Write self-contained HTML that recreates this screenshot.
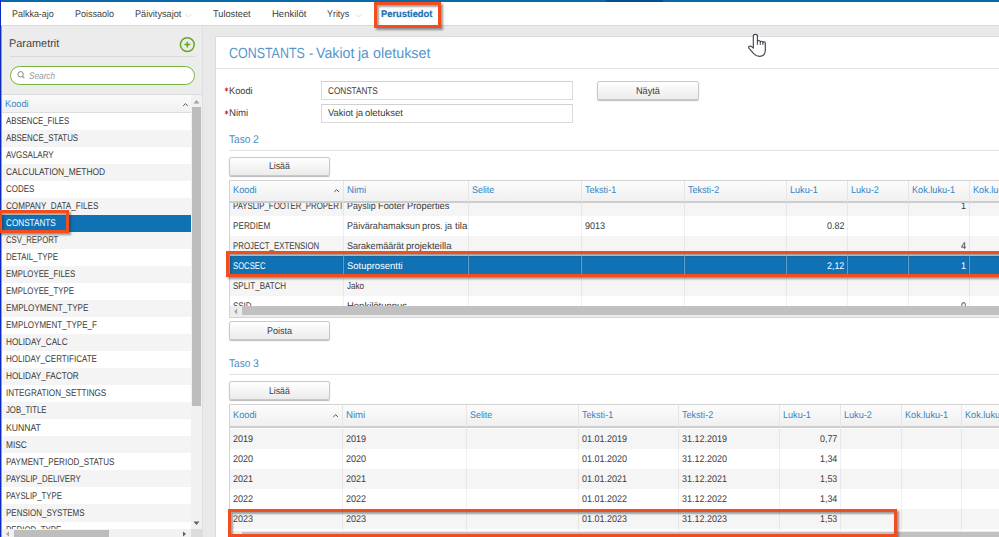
<!DOCTYPE html><html><head><meta charset="utf-8"><style>
*{box-sizing:border-box;margin:0;padding:0}
html,body{width:999px;height:537px;overflow:hidden;background:#e9e9e9;font-family:"Liberation Sans",sans-serif;color:#333;position:relative}
.a{position:absolute}
.t{position:absolute;white-space:nowrap;line-height:1;transform-origin:0 0;-webkit-text-stroke:0px currentColor;text-rendering:geometricPrecision}
.clip{position:absolute;overflow:hidden}
.btn{position:absolute;border:1px solid #c9c9c9;border-radius:2px;background:linear-gradient(#ffffff,#ebebeb);box-shadow:0 1px 1px rgba(0,0,0,.28)}
.inp{position:absolute;border:1px solid #dadada;border-top-color:#d0d0d0;background:#fff}
.orange{position:absolute;border:3.3px solid #f04e1f;box-shadow:2px 2px 2px rgba(50,50,50,.5), inset 2px 2px 2px rgba(50,50,50,.45)}
</style></head><body>
<div class="a" style="left:0px;top:0px;width:999px;height:26px;background:#fff;"></div>
<div class="a" style="left:0px;top:0px;width:999px;height:2px;background:#0b68a9;"></div>
<div class="a" style="left:606px;top:0px;width:57px;height:2px;background:#06508a;"></div>
<div class="a" style="left:1px;top:25px;width:998px;height:1px;background:#d9d9d9;"></div>
<div class="t" style="left:11.60px;top:10.08px;font-size:9.71px;color:#3d3d3d;"><span style="position:absolute;left:0.00px;top:0;transform:scaleX(0.9224);transform-origin:0 0">Palkka-ajo</span></div>
<div class="t" style="left:74.60px;top:10.08px;font-size:9.71px;color:#3d3d3d;"><span style="position:absolute;left:0.00px;top:0;transform:scaleX(0.9259);transform-origin:0 0">Poissaolo</span></div>
<div class="t" style="left:134.60px;top:10.08px;font-size:9.71px;color:#3d3d3d;"><span style="position:absolute;left:0.00px;top:0;transform:scaleX(0.9434);transform-origin:0 0">Päivitysajot</span></div>
<div class="t" style="left:212.80px;top:10.08px;font-size:9.71px;color:#3d3d3d;"><span style="position:absolute;left:0.00px;top:0;transform:scaleX(0.9514);transform-origin:0 0">Tulosteet</span></div>
<div class="t" style="left:271.80px;top:10.08px;font-size:9.71px;color:#3d3d3d;"><span style="position:absolute;left:0.00px;top:0;transform:scaleX(0.9784);transform-origin:0 0">Henkilöt</span></div>
<div class="t" style="left:327.00px;top:10.08px;font-size:9.71px;color:#3d3d3d;"><span style="position:absolute;left:0.00px;top:0;transform:scaleX(0.9155);transform-origin:0 0">Yritys</span></div>
<div class="t" style="left:381.00px;top:10.08px;font-size:9.71px;color:#1a70b6;font-weight:bold;-webkit-text-stroke:0.2px #1a70b6;"><span style="position:absolute;left:0.00px;top:0;transform:scaleX(0.9626);transform-origin:0 0">Perustiedot</span></div>
<svg class="a" style="left:185px;top:13px" width="7" height="5" viewBox="0 0 7 5"><path d="M0.5 1L3.5 4L6.5 1" fill="none" stroke="#d8d8d8" stroke-width="0.9"/></svg>
<svg class="a" style="left:355px;top:13px" width="7" height="5" viewBox="0 0 7 5"><path d="M0.5 1L3.5 4L6.5 1" fill="none" stroke="#d8d8d8" stroke-width="0.9"/></svg>
<div class="a" style="left:0px;top:26px;width:202px;height:511px;background:#ececec;"></div>
<div class="a" style="left:202px;top:26px;width:1px;height:511px;background:#dfdfdf;"></div>
<div class="t" style="left:9.40px;top:39.01px;font-size:11.20px;color:#444;"><span style="position:absolute;left:0.00px;top:0;transform:scaleX(0.9747);transform-origin:0 0">Parametrit</span></div>
<svg class="a" style="left:179px;top:36px" width="17" height="17" viewBox="0 0 17 17"><circle cx="8.3" cy="8.6" r="6.9" fill="none" stroke="#64a81e" stroke-width="1.5"/><path d="M8.3 5.7v5.8M5.4 8.6h5.8" stroke="#64a81e" stroke-width="1.5"/></svg>
<div class="a" style="left:10px;top:56px;width:185px;height:1px;background:#dadada;"></div>
<div class="a" style="left:10px;top:66px;width:185px;height:19px;border:1.5px solid #78b444;border-radius:10px;background:#fff"></div>
<svg class="a" style="left:16px;top:70px" width="10" height="10" viewBox="0 0 10 10"><circle cx="4.6" cy="4.3" r="2.7" fill="none" stroke="#858585" stroke-width="1.0"/><path d="M6.5 6.3l1.9 1.9" stroke="#858585" stroke-width="1.1"/></svg>
<div class="t" style="left:29.00px;top:71.68px;font-size:9.71px;color:#9a9a9a;font-style:italic;"><span style="position:absolute;left:0.00px;top:0;transform:scaleX(0.8476);transform-origin:0 0">Search</span></div>
<div class="a" style="left:1px;top:94px;width:201px;height:1px;background:#dcdcdc;"></div>
<div class="a" style="left:1px;top:95px;width:190px;height:17px;background:linear-gradient(#fafafa,#f1f1f1);"></div>
<div class="a" style="left:1px;top:112px;width:190px;height:1px;background:#dedede;"></div>
<div class="t" style="left:5.40px;top:99.98px;font-size:9.71px;color:#3a86c4;"><span style="position:absolute;left:0.00px;top:0;transform:scaleX(0.9523);transform-origin:0 0">Koodi</span></div>
<svg class="a" style="left:182px;top:102px" width="7" height="5" viewBox="0 0 7 5"><path d="M1.2 3.9L3.5 1.7L5.8 3.9" fill="none" stroke="#505050" stroke-width="1.0"/></svg>
<div class="clip" style="left:1px;top:113px;width:190px;height:416px">
<div class="a" style="left:0;top:-0.2px;width:190px;height:17.1px;background:#fff"></div>
<div class="t" style="left:4.80px;top:3.98px;font-size:9.71px;color:#3a3a3a;"><span style="position:absolute;left:0.00px;top:0;transform:scaleX(0.8034);transform-origin:0 0">ABSENCE_FILES</span></div>
<div class="a" style="left:0;top:16.83px;width:190px;height:17.1px;background:#f4f4f4"></div>
<div class="t" style="left:4.80px;top:21.01px;font-size:9.71px;color:#3a3a3a;"><span style="position:absolute;left:0.00px;top:0;transform:scaleX(0.8138);transform-origin:0 0">ABSENCE_STATUS</span></div>
<div class="a" style="left:0;top:33.86px;width:190px;height:17.1px;background:#fff"></div>
<div class="t" style="left:4.80px;top:38.04px;font-size:9.71px;color:#3a3a3a;"><span style="position:absolute;left:0.00px;top:0;transform:scaleX(0.8230);transform-origin:0 0">AVGSALARY</span></div>
<div class="a" style="left:0;top:50.89px;width:190px;height:17.1px;background:#f4f4f4"></div>
<div class="t" style="left:4.80px;top:55.07px;font-size:9.71px;color:#3a3a3a;"><span style="position:absolute;left:0.00px;top:0;transform:scaleX(0.8647);transform-origin:0 0">CALCULATION_METHOD</span></div>
<div class="a" style="left:0;top:67.92px;width:190px;height:17.1px;background:#fff"></div>
<div class="t" style="left:4.80px;top:72.10px;font-size:9.71px;color:#3a3a3a;"><span style="position:absolute;left:0.00px;top:0;transform:scaleX(0.8215);transform-origin:0 0">CODES</span></div>
<div class="a" style="left:0;top:84.95px;width:190px;height:17.1px;background:#f4f4f4"></div>
<div class="t" style="left:4.80px;top:89.13px;font-size:9.71px;color:#3a3a3a;"><span style="position:absolute;left:0.00px;top:0;transform:scaleX(0.8349);transform-origin:0 0">COMPANY_DATA_FILES</span></div>
<div class="a" style="left:0;top:101.98px;width:190px;height:17.1px;background:#1071b5"></div>
<div class="t" style="left:4.80px;top:106.16px;font-size:9.71px;color:#fff;"><span style="position:absolute;left:0.00px;top:0;transform:scaleX(0.8425);transform-origin:0 0">CONSTANTS</span></div>
<div class="a" style="left:0;top:119.01px;width:190px;height:17.1px;background:#f4f4f4"></div>
<div class="t" style="left:4.80px;top:123.19px;font-size:9.71px;color:#3a3a3a;"><span style="position:absolute;left:0.00px;top:0;transform:scaleX(0.7975);transform-origin:0 0">CSV_REPORT</span></div>
<div class="a" style="left:0;top:136.04px;width:190px;height:17.1px;background:#fff"></div>
<div class="t" style="left:4.80px;top:140.22px;font-size:9.71px;color:#3a3a3a;"><span style="position:absolute;left:0.00px;top:0;transform:scaleX(0.8134);transform-origin:0 0">DETAIL_TYPE</span></div>
<div class="a" style="left:0;top:153.07px;width:190px;height:17.1px;background:#f4f4f4"></div>
<div class="t" style="left:4.80px;top:157.25px;font-size:9.71px;color:#3a3a3a;"><span style="position:absolute;left:0.00px;top:0;transform:scaleX(0.8069);transform-origin:0 0">EMPLOYEE_FILES</span></div>
<div class="a" style="left:0;top:170.1px;width:190px;height:17.1px;background:#fff"></div>
<div class="t" style="left:4.80px;top:174.28px;font-size:9.71px;color:#3a3a3a;"><span style="position:absolute;left:0.00px;top:0;transform:scaleX(0.8071);transform-origin:0 0">EMPLOYEE_TYPE</span></div>
<div class="a" style="left:0;top:187.13px;width:190px;height:17.1px;background:#f4f4f4"></div>
<div class="t" style="left:4.80px;top:191.31px;font-size:9.71px;color:#3a3a3a;"><span style="position:absolute;left:0.00px;top:0;transform:scaleX(0.8355);transform-origin:0 0">EMPLOYMENT_TYPE</span></div>
<div class="a" style="left:0;top:204.16px;width:190px;height:17.1px;background:#fff"></div>
<div class="t" style="left:4.80px;top:208.34px;font-size:9.71px;color:#3a3a3a;"><span style="position:absolute;left:0.00px;top:0;transform:scaleX(0.8266);transform-origin:0 0">EMPLOYMENT_TYPE_F</span></div>
<div class="a" style="left:0;top:221.19px;width:190px;height:17.1px;background:#f4f4f4"></div>
<div class="t" style="left:4.80px;top:225.37px;font-size:9.71px;color:#3a3a3a;"><span style="position:absolute;left:0.00px;top:0;transform:scaleX(0.8412);transform-origin:0 0">HOLIDAY_CALC</span></div>
<div class="a" style="left:0;top:238.22px;width:190px;height:17.1px;background:#fff"></div>
<div class="t" style="left:4.80px;top:242.40px;font-size:9.71px;color:#3a3a3a;"><span style="position:absolute;left:0.00px;top:0;transform:scaleX(0.8267);transform-origin:0 0">HOLIDAY_CERTIFICATE</span></div>
<div class="a" style="left:0;top:255.25px;width:190px;height:17.1px;background:#f4f4f4"></div>
<div class="t" style="left:4.80px;top:259.43px;font-size:9.71px;color:#3a3a3a;"><span style="position:absolute;left:0.00px;top:0;transform:scaleX(0.8416);transform-origin:0 0">HOLIDAY_FACTOR</span></div>
<div class="a" style="left:0;top:272.28px;width:190px;height:17.1px;background:#fff"></div>
<div class="t" style="left:4.80px;top:276.46px;font-size:9.71px;color:#3a3a3a;"><span style="position:absolute;left:0.00px;top:0;transform:scaleX(0.8392);transform-origin:0 0">INTEGRATION_SETTINGS</span></div>
<div class="a" style="left:0;top:289.31px;width:190px;height:17.1px;background:#f4f4f4"></div>
<div class="t" style="left:4.80px;top:293.49px;font-size:9.71px;color:#3a3a3a;"><span style="position:absolute;left:0.00px;top:0;transform:scaleX(0.7985);transform-origin:0 0">JOB_TITLE</span></div>
<div class="a" style="left:0;top:306.34px;width:190px;height:17.1px;background:#fff"></div>
<div class="t" style="left:4.80px;top:310.52px;font-size:9.71px;color:#3a3a3a;"><span style="position:absolute;left:0.00px;top:0;transform:scaleX(0.8902);transform-origin:0 0">KUNNAT</span></div>
<div class="a" style="left:0;top:323.37px;width:190px;height:17.1px;background:#f4f4f4"></div>
<div class="t" style="left:4.80px;top:327.55px;font-size:9.71px;color:#3a3a3a;"><span style="position:absolute;left:0.00px;top:0;transform:scaleX(0.8560);transform-origin:0 0">MISC</span></div>
<div class="a" style="left:0;top:340.4px;width:190px;height:17.1px;background:#fff"></div>
<div class="t" style="left:4.80px;top:344.58px;font-size:9.71px;color:#3a3a3a;"><span style="position:absolute;left:0.00px;top:0;transform:scaleX(0.8325);transform-origin:0 0">PAYMENT_PERIOD_STATUS</span></div>
<div class="a" style="left:0;top:357.43px;width:190px;height:17.1px;background:#f4f4f4"></div>
<div class="t" style="left:4.80px;top:361.61px;font-size:9.71px;color:#3a3a3a;"><span style="position:absolute;left:0.00px;top:0;transform:scaleX(0.8099);transform-origin:0 0">PAYSLIP_DELIVERY</span></div>
<div class="a" style="left:0;top:374.46px;width:190px;height:17.1px;background:#fff"></div>
<div class="t" style="left:4.80px;top:378.64px;font-size:9.71px;color:#3a3a3a;"><span style="position:absolute;left:0.00px;top:0;transform:scaleX(0.8010);transform-origin:0 0">PAYSLIP_TYPE</span></div>
<div class="a" style="left:0;top:391.49px;width:190px;height:17.1px;background:#f4f4f4"></div>
<div class="t" style="left:4.80px;top:395.67px;font-size:9.71px;color:#3a3a3a;"><span style="position:absolute;left:0.00px;top:0;transform:scaleX(0.8236);transform-origin:0 0">PENSION_SYSTEMS</span></div>
<div class="a" style="left:0;top:408.52px;width:190px;height:17.1px;background:#fff"></div>
<div class="t" style="left:4.80px;top:412.70px;font-size:9.71px;color:#3a3a3a;"><span style="position:absolute;left:0.00px;top:0;transform:scaleX(0.8132);transform-origin:0 0">PERIOD_TYPE</span></div>
</div>
<div class="a" style="left:191px;top:95px;width:11px;height:434px;background:#f1f1f1;"></div>
<svg class="a" style="left:193px;top:99px" width="7" height="5" viewBox="0 0 7 5"><path d="M0.5 4.5L3.5 1L6.5 4.5z" fill="#a3a3a3"/></svg>
<div class="a" style="left:192px;top:107px;width:9px;height:299px;background:#bdbdbd;"></div>
<svg class="a" style="left:193px;top:521px" width="7" height="5" viewBox="0 0 7 5"><path d="M0.5 0.5L3.5 4L6.5 0.5z" fill="#606060"/></svg>
<div class="a" style="left:1px;top:529px;width:201px;height:8px;background:#f1f1f1;"></div>
<div class="a" style="left:14px;top:530px;width:95px;height:7px;background:#bdbdbd;"></div>
<div class="a" style="left:191px;top:529px;width:11px;height:8px;background:#dcdcdc;"></div>
<svg class="a" style="left:5px;top:531px" width="5" height="6" viewBox="0 0 5 6"><path d="M4 0.5L1 3L4 5.5z" fill="#a3a3a3"/></svg>
<svg class="a" style="left:182px;top:531px" width="5" height="6" viewBox="0 0 5 6"><path d="M1 0.5L4 3L1 5.5z" fill="#606060"/></svg>
<div class="a" style="left:0px;top:0px;width:1px;height:537px;background:#0a2bbd;"></div>
<div class="a" style="left:1px;top:26px;width:1px;height:511px;background:#8c9ad8;"></div>
<div class="a" style="left:215px;top:36px;width:784px;height:501px;background:#dcdcdc;"></div>
<div class="a" style="left:216px;top:37px;width:783px;height:500px;background:#fff;"></div>
<div class="t" style="left:229.20px;top:46.78px;font-size:14.78px;color:#5596cc;-webkit-text-stroke:0;"><span style="position:absolute;left:0.00px;top:0;transform:scaleX(0.8425);transform-origin:0 0">CONSTANTS</span><span style="position:absolute;left:79.37px;top:0;transform:scaleX(0.8757);transform-origin:0 0">-</span><span style="position:absolute;left:87.17px;top:0;transform:scaleX(0.9602);transform-origin:0 0">Vakiot</span><span style="position:absolute;left:129.05px;top:0;transform:scaleX(0.9421);transform-origin:0 0">ja</span><span style="position:absolute;left:143.37px;top:0;transform:scaleX(0.9738);transform-origin:0 0">oletukset</span></div>
<div class="a" style="left:216px;top:68px;width:783px;height:1px;background:#e2e2e2;"></div>
<svg class="a" style="left:224.3px;top:86.8px" width="5" height="5" viewBox="0 0 5 5"><path d="M2.5 0.6V4.4M0.8 1.6L4.2 3.4M4.2 1.6L0.8 3.4" stroke="#d9302a" stroke-width="1.0"/></svg>
<div class="t" style="left:229.00px;top:86.68px;font-size:9.71px;color:#3a3a3a;"><span style="position:absolute;left:0.00px;top:0;transform:scaleX(0.9523);transform-origin:0 0">Koodi</span></div>
<svg class="a" style="left:224.3px;top:109.5px" width="5" height="5" viewBox="0 0 5 5"><path d="M2.5 0.6V4.4M0.8 1.6L4.2 3.4M4.2 1.6L0.8 3.4" stroke="#d9302a" stroke-width="1.0"/></svg>
<div class="t" style="left:229.00px;top:109.28px;font-size:9.71px;color:#3a3a3a;"><span style="position:absolute;left:0.00px;top:0;transform:scaleX(0.9926);transform-origin:0 0">Nimi</span></div>
<div class="inp" style="left:321px;top:81px;width:251.5px;height:19px"></div>
<div class="inp" style="left:321px;top:104px;width:251.5px;height:18.5px"></div>
<div class="t" style="left:328.20px;top:86.68px;font-size:9.71px;color:#3a3a3a;"><span style="position:absolute;left:0.00px;top:0;transform:scaleX(0.8425);transform-origin:0 0">CONSTANTS</span></div>
<div class="t" style="left:328.20px;top:109.48px;font-size:9.71px;color:#3a3a3a;"><span style="position:absolute;left:0.00px;top:0;transform:scaleX(0.9602);transform-origin:0 0">Vakiot</span><span style="position:absolute;left:27.51px;top:0;transform:scaleX(0.9421);transform-origin:0 0">ja</span><span style="position:absolute;left:36.91px;top:0;transform:scaleX(0.9738);transform-origin:0 0">oletukset</span></div>
<div class="btn" style="left:597px;top:81px;width:101.5px;height:19px"></div>
<div class="t" style="left:636.02px;top:86.68px;font-size:9.71px;color:#3a3a3a;"><span style="position:absolute;left:0.00px;top:0;transform:scaleX(0.9447);transform-origin:0 0">Näytä</span></div>
<div class="t" style="left:229.00px;top:134.51px;font-size:11.20px;color:#4c8cc4;"><span style="position:absolute;left:0.00px;top:0;transform:scaleX(0.9054);transform-origin:0 0">Taso</span><span style="position:absolute;left:24.06px;top:0;transform:scaleX(0.9317);transform-origin:0 0">2</span></div>
<div class="a" style="left:229px;top:150px;width:770px;height:1px;background:#e3e3e3;"></div>
<div class="btn" style="left:229px;top:157px;width:101px;height:18.5px"></div>
<div class="t" style="left:269.21px;top:161.88px;font-size:9.71px;color:#3a3a3a;"><span style="position:absolute;left:0.00px;top:0;transform:scaleX(0.8951);transform-origin:0 0">Lisää</span></div>
<div class="a" style="left:229px;top:180px;width:770px;height:1px;background:#d3d3d3;"></div>
<div class="a" style="left:229px;top:180px;width:1px;height:138px;background:#d3d3d3;"></div>
<div class="a" style="left:229px;top:317px;width:770px;height:1px;background:#d3d3d3;"></div>
<div class="clip" style="left:230px;top:203px;width:769px;height:102.5px">
<div class="a" style="left:0;top:-7.30px;width:770px;height:20.30px;background:#f5f5f5"></div>
<div class="a" style="left:0;top:12.70px;width:770px;height:20.30px;background:#fff"></div>
<div class="a" style="left:0;top:32.70px;width:770px;height:20.30px;background:#f5f5f5"></div>
<div class="a" style="left:0;top:52.70px;width:770px;height:20.30px;background:#1071b5"></div>
<div class="a" style="left:0;top:72.70px;width:770px;height:20.30px;background:#f5f5f5"></div>
<div class="a" style="left:0;top:92.70px;width:770px;height:20.30px;background:#fff"></div>
<div class="a" style="left:112.8px;top:0;width:1px;height:305.5px;background:rgba(0,0,0,.06)"></div>
<div class="a" style="left:237.8px;top:0;width:1px;height:305.5px;background:rgba(0,0,0,.06)"></div>
<div class="a" style="left:350.8px;top:0;width:1px;height:305.5px;background:rgba(0,0,0,.06)"></div>
<div class="a" style="left:453.9px;top:0;width:1px;height:305.5px;background:rgba(0,0,0,.06)"></div>
<div class="a" style="left:556.0px;top:0;width:1px;height:305.5px;background:rgba(0,0,0,.06)"></div>
<div class="a" style="left:617.0px;top:0;width:1px;height:305.5px;background:rgba(0,0,0,.06)"></div>
<div class="a" style="left:678.0px;top:0;width:1px;height:305.5px;background:rgba(0,0,0,.06)"></div>
<div class="a" style="left:739.0px;top:0;width:1px;height:305.5px;background:rgba(0,0,0,.06)"></div>
<div class="a" style="left:829.5px;top:0;width:1px;height:305.5px;background:rgba(0,0,0,.06)"></div>
<div class="a" style="left:112.8px;top:52.70px;width:1px;height:20.00px;background:rgba(255,255,255,.35)"></div>
<div class="a" style="left:111.8px;top:52.70px;width:1px;height:20.00px;background:rgba(0,0,0,.08)"></div>
<div class="a" style="left:237.8px;top:52.70px;width:1px;height:20.00px;background:rgba(255,255,255,.35)"></div>
<div class="a" style="left:236.8px;top:52.70px;width:1px;height:20.00px;background:rgba(0,0,0,.08)"></div>
<div class="a" style="left:350.8px;top:52.70px;width:1px;height:20.00px;background:rgba(255,255,255,.35)"></div>
<div class="a" style="left:349.8px;top:52.70px;width:1px;height:20.00px;background:rgba(0,0,0,.08)"></div>
<div class="a" style="left:453.9px;top:52.70px;width:1px;height:20.00px;background:rgba(255,255,255,.35)"></div>
<div class="a" style="left:452.9px;top:52.70px;width:1px;height:20.00px;background:rgba(0,0,0,.08)"></div>
<div class="a" style="left:556.0px;top:52.70px;width:1px;height:20.00px;background:rgba(255,255,255,.35)"></div>
<div class="a" style="left:555.0px;top:52.70px;width:1px;height:20.00px;background:rgba(0,0,0,.08)"></div>
<div class="a" style="left:617.0px;top:52.70px;width:1px;height:20.00px;background:rgba(255,255,255,.35)"></div>
<div class="a" style="left:616.0px;top:52.70px;width:1px;height:20.00px;background:rgba(0,0,0,.08)"></div>
<div class="a" style="left:678.0px;top:52.70px;width:1px;height:20.00px;background:rgba(255,255,255,.35)"></div>
<div class="a" style="left:677.0px;top:52.70px;width:1px;height:20.00px;background:rgba(0,0,0,.08)"></div>
<div class="a" style="left:739.0px;top:52.70px;width:1px;height:20.00px;background:rgba(255,255,255,.35)"></div>
<div class="a" style="left:738.0px;top:52.70px;width:1px;height:20.00px;background:rgba(0,0,0,.08)"></div>
<div class="a" style="left:829.5px;top:52.70px;width:1px;height:20.00px;background:rgba(255,255,255,.35)"></div>
<div class="a" style="left:828.5px;top:52.70px;width:1px;height:20.00px;background:rgba(0,0,0,.08)"></div>
</div>
<div class="a" style="left:230px;top:181px;width:769px;height:21px;background:linear-gradient(#fcfcfc,#efefef);"></div>
<div class="a" style="left:230px;top:201px;width:769px;height:2px;background:#cdcdcd;"></div>
<div class="a" style="left:342.8px;top:181px;width:1px;height:21px;background:#e6e6e6;"></div>
<div class="a" style="left:467.8px;top:181px;width:1px;height:21px;background:#e6e6e6;"></div>
<div class="a" style="left:580.8px;top:181px;width:1px;height:21px;background:#e6e6e6;"></div>
<div class="a" style="left:683.9px;top:181px;width:1px;height:21px;background:#e6e6e6;"></div>
<div class="a" style="left:786.0px;top:181px;width:1px;height:21px;background:#e6e6e6;"></div>
<div class="a" style="left:847.0px;top:181px;width:1px;height:21px;background:#e6e6e6;"></div>
<div class="a" style="left:908.0px;top:181px;width:1px;height:21px;background:#e6e6e6;"></div>
<div class="a" style="left:969.0px;top:181px;width:1px;height:21px;background:#e6e6e6;"></div>
<div class="a" style="left:1059.5px;top:181px;width:1px;height:21px;background:#e6e6e6;"></div>
<div class="t" style="left:233.00px;top:186.08px;font-size:9.71px;color:#3485c5;"><span style="position:absolute;left:0.00px;top:0;transform:scaleX(0.9523);transform-origin:0 0">Koodi</span></div>
<div class="t" style="left:346.80px;top:186.08px;font-size:9.71px;color:#3485c5;"><span style="position:absolute;left:0.00px;top:0;transform:scaleX(0.9926);transform-origin:0 0">Nimi</span></div>
<div class="t" style="left:471.80px;top:186.08px;font-size:9.71px;color:#3485c5;"><span style="position:absolute;left:0.00px;top:0;transform:scaleX(0.9165);transform-origin:0 0">Selite</span></div>
<div class="t" style="left:584.80px;top:186.08px;font-size:9.71px;color:#3485c5;"><span style="position:absolute;left:0.00px;top:0;transform:scaleX(0.9327);transform-origin:0 0">Teksti-1</span></div>
<div class="t" style="left:687.90px;top:186.08px;font-size:9.71px;color:#3485c5;"><span style="position:absolute;left:0.00px;top:0;transform:scaleX(0.9327);transform-origin:0 0">Teksti-2</span></div>
<div class="t" style="left:790.00px;top:186.08px;font-size:9.71px;color:#3485c5;"><span style="position:absolute;left:0.00px;top:0;transform:scaleX(0.9381);transform-origin:0 0">Luku-1</span></div>
<div class="t" style="left:851.00px;top:186.08px;font-size:9.71px;color:#3485c5;"><span style="position:absolute;left:0.00px;top:0;transform:scaleX(0.9381);transform-origin:0 0">Luku-2</span></div>
<div class="t" style="left:912.00px;top:186.08px;font-size:9.71px;color:#3485c5;"><span style="position:absolute;left:0.00px;top:0;transform:scaleX(0.9414);transform-origin:0 0">Kok.luku-1</span></div>
<div class="t" style="left:973.00px;top:186.08px;font-size:9.71px;color:#3485c5;"><span style="position:absolute;left:0.00px;top:0;transform:scaleX(0.9414);transform-origin:0 0">Kok.luku-2</span></div>
<svg class="a" style="left:333.1px;top:188.4px" width="7" height="5" viewBox="0 0 7 5"><path d="M1.3 3.9L3.6 1.7L5.9 3.9" fill="none" stroke="#505050" stroke-width="1.0"/></svg>
<div class="clip" style="left:230.5px;top:203px;width:112.80000000000001px;height:102.5px"><div class="t" style="left:2.70px;top:-1.12px;font-size:9.71px;color:#3a3a3a;"><span style="position:absolute;left:0.00px;top:0;transform:scaleX(0.8075);transform-origin:0 0">PAYSLIP_FOOTER_PROPERTIES</span></div></div>
<div class="clip" style="left:344.3px;top:203px;width:124.0px;height:102.5px"><div class="t" style="left:2.70px;top:-1.12px;font-size:9.71px;color:#3a3a3a;"><span style="position:absolute;left:0.00px;top:0;transform:scaleX(0.9159);transform-origin:0 0">Payslip</span><span style="position:absolute;left:30.96px;top:0;transform:scaleX(0.9552);transform-origin:0 0">Footer</span><span style="position:absolute;left:60.05px;top:0;transform:scaleX(0.9585);transform-origin:0 0">Properties</span></div></div>
<div class="clip" style="left:909.5px;top:203px;width:60.0px;height:102.5px"><div class="t" style="left:51.67px;top:-1.12px;font-size:9.71px;color:#3a3a3a;"><span style="position:absolute;left:0.00px;top:0;transform:scaleX(0.9317);transform-origin:0 0">1</span></div></div>
<div class="clip" style="left:230.5px;top:203px;width:112.80000000000001px;height:102.5px"><div class="t" style="left:2.70px;top:18.88px;font-size:9.71px;color:#3a3a3a;"><span style="position:absolute;left:0.00px;top:0;transform:scaleX(0.8440);transform-origin:0 0">PERDIEM</span></div></div>
<div class="clip" style="left:344.3px;top:203px;width:124.0px;height:102.5px"><div class="t" style="left:2.70px;top:18.88px;font-size:9.71px;color:#3a3a3a;"><span style="position:absolute;left:0.00px;top:0;transform:scaleX(0.9395);transform-origin:0 0">Päivärahamaksun</span><span style="position:absolute;left:75.31px;top:0;transform:scaleX(0.9572);transform-origin:0 0">pros.</span><span style="position:absolute;left:98.26px;top:0;transform:scaleX(0.9421);transform-origin:0 0">ja</span><span style="position:absolute;left:107.67px;top:0;transform:scaleX(1.0032);transform-origin:0 0">tila</span></div></div>
<div class="clip" style="left:582.3px;top:203px;width:102.10000000000002px;height:102.5px"><div class="t" style="left:2.70px;top:18.88px;font-size:9.71px;color:#3a3a3a;"><span style="position:absolute;left:0.00px;top:0;transform:scaleX(0.9317);transform-origin:0 0">9013</span></div></div>
<div class="clip" style="left:787.5px;top:203px;width:60.0px;height:102.5px"><div class="t" style="left:39.26px;top:18.88px;font-size:9.71px;color:#3a3a3a;"><span style="position:absolute;left:0.00px;top:0;transform:scaleX(0.9226);transform-origin:0 0">0.82</span></div></div>
<div class="clip" style="left:230.5px;top:203px;width:112.80000000000001px;height:102.5px"><div class="t" style="left:2.70px;top:38.88px;font-size:9.71px;color:#3a3a3a;"><span style="position:absolute;left:0.00px;top:0;transform:scaleX(0.8082);transform-origin:0 0">PROJECT_EXTENSION</span></div></div>
<div class="clip" style="left:344.3px;top:203px;width:124.0px;height:102.5px"><div class="t" style="left:2.70px;top:38.88px;font-size:9.71px;color:#3a3a3a;"><span style="position:absolute;left:0.00px;top:0;transform:scaleX(0.9314);transform-origin:0 0">Sarakemäärät</span><span style="position:absolute;left:59.09px;top:0;transform:scaleX(0.9807);transform-origin:0 0">projekteilla</span></div></div>
<div class="clip" style="left:909.5px;top:203px;width:60.0px;height:102.5px"><div class="t" style="left:51.67px;top:38.88px;font-size:9.71px;color:#3a3a3a;"><span style="position:absolute;left:0.00px;top:0;transform:scaleX(0.9317);transform-origin:0 0">4</span></div></div>
<div class="clip" style="left:230.5px;top:203px;width:112.80000000000001px;height:102.5px"><div class="t" style="left:2.70px;top:58.88px;font-size:9.71px;color:#fff;"><span style="position:absolute;left:0.00px;top:0;transform:scaleX(0.7928);transform-origin:0 0">SOCSEC</span></div></div>
<div class="clip" style="left:344.3px;top:203px;width:124.0px;height:102.5px"><div class="t" style="left:2.70px;top:58.88px;font-size:9.71px;color:#fff;"><span style="position:absolute;left:0.00px;top:0;transform:scaleX(0.9744);transform-origin:0 0">Sotuprosentti</span></div></div>
<div class="clip" style="left:787.5px;top:203px;width:60.0px;height:102.5px"><div class="t" style="left:39.45px;top:58.88px;font-size:9.71px;color:#fff;"><span style="position:absolute;left:0.00px;top:0;transform:scaleX(0.9128);transform-origin:0 0">2,12</span></div></div>
<div class="clip" style="left:909.5px;top:203px;width:60.0px;height:102.5px"><div class="t" style="left:51.67px;top:58.88px;font-size:9.71px;color:#fff;"><span style="position:absolute;left:0.00px;top:0;transform:scaleX(0.9317);transform-origin:0 0">1</span></div></div>
<div class="clip" style="left:230.5px;top:203px;width:112.80000000000001px;height:102.5px"><div class="t" style="left:2.70px;top:78.88px;font-size:9.71px;color:#3a3a3a;"><span style="position:absolute;left:0.00px;top:0;transform:scaleX(0.8235);transform-origin:0 0">SPLIT_BATCH</span></div></div>
<div class="clip" style="left:344.3px;top:203px;width:124.0px;height:102.5px"><div class="t" style="left:2.70px;top:78.88px;font-size:9.71px;color:#3a3a3a;"><span style="position:absolute;left:0.00px;top:0;transform:scaleX(0.8290);transform-origin:0 0">Jako</span></div></div>
<div class="clip" style="left:230.5px;top:203px;width:112.80000000000001px;height:102.5px"><div class="t" style="left:2.70px;top:98.88px;font-size:9.71px;color:#3a3a3a;"><span style="position:absolute;left:0.00px;top:0;transform:scaleX(0.8175);transform-origin:0 0">SSID</span></div></div>
<div class="clip" style="left:344.3px;top:203px;width:124.0px;height:102.5px"><div class="t" style="left:2.70px;top:98.88px;font-size:9.71px;color:#3a3a3a;"><span style="position:absolute;left:0.00px;top:0;transform:scaleX(0.9770);transform-origin:0 0">Henkilötunnus</span></div></div>
<div class="clip" style="left:909.5px;top:203px;width:60.0px;height:102.5px"><div class="t" style="left:51.67px;top:98.88px;font-size:9.71px;color:#3a3a3a;"><span style="position:absolute;left:0.00px;top:0;transform:scaleX(0.9317);transform-origin:0 0">0</span></div></div>
<div class="a" style="left:230px;top:305.5px;width:769px;height:11.5px;background:#ececec;"></div>
<div class="a" style="left:242px;top:306.0px;width:757px;height:9px;background:#c1c1c1;"></div>
<svg class="a" style="left:233px;top:307.5px" width="5" height="7" viewBox="0 0 5 7"><path d="M4.2 0.6L1 3.5L4.2 6.4z" fill="#a8a8a8"/></svg>
<div class="btn" style="left:229px;top:321px;width:101px;height:18.5px"></div>
<div class="t" style="left:267.08px;top:326.88px;font-size:9.71px;color:#3a3a3a;"><span style="position:absolute;left:0.00px;top:0;transform:scaleX(0.9277);transform-origin:0 0">Poista</span></div>
<div class="t" style="left:229.00px;top:359.21px;font-size:11.20px;color:#4c8cc4;"><span style="position:absolute;left:0.00px;top:0;transform:scaleX(0.9054);transform-origin:0 0">Taso</span><span style="position:absolute;left:24.06px;top:0;transform:scaleX(0.9317);transform-origin:0 0">3</span></div>
<div class="a" style="left:229px;top:374px;width:770px;height:1px;background:#e3e3e3;"></div>
<div class="btn" style="left:229px;top:381.3px;width:101px;height:18.5px"></div>
<div class="t" style="left:269.21px;top:386.88px;font-size:9.71px;color:#3a3a3a;"><span style="position:absolute;left:0.00px;top:0;transform:scaleX(0.8951);transform-origin:0 0">Lisää</span></div>
<div class="a" style="left:229px;top:404px;width:770px;height:1px;background:#d3d3d3;"></div>
<div class="a" style="left:229px;top:404px;width:1px;height:596px;background:#d3d3d3;"></div>
<div class="clip" style="left:230px;top:428px;width:769px;height:103px">
<div class="a" style="left:0;top:0.50px;width:770px;height:20.40px;background:#f5f5f5"></div>
<div class="a" style="left:0;top:20.60px;width:770px;height:20.40px;background:#fff"></div>
<div class="a" style="left:0;top:40.70px;width:770px;height:20.40px;background:#f5f5f5"></div>
<div class="a" style="left:0;top:60.80px;width:770px;height:20.40px;background:#fff"></div>
<div class="a" style="left:0;top:80.90px;width:770px;height:20.40px;background:#f5f5f5"></div>
<div class="a" style="left:111.7px;top:0;width:1px;height:531px;background:rgba(0,0,0,.06)"></div>
<div class="a" style="left:236.0px;top:0;width:1px;height:531px;background:rgba(0,0,0,.06)"></div>
<div class="a" style="left:348.1px;top:0;width:1px;height:531px;background:rgba(0,0,0,.06)"></div>
<div class="a" style="left:448.2px;top:0;width:1px;height:531px;background:rgba(0,0,0,.06)"></div>
<div class="a" style="left:549.3px;top:0;width:1px;height:531px;background:rgba(0,0,0,.06)"></div>
<div class="a" style="left:610.0px;top:0;width:1px;height:531px;background:rgba(0,0,0,.06)"></div>
<div class="a" style="left:670.5px;top:0;width:1px;height:531px;background:rgba(0,0,0,.06)"></div>
<div class="a" style="left:730.8px;top:0;width:1px;height:531px;background:rgba(0,0,0,.06)"></div>
<div class="a" style="left:829.5px;top:0;width:1px;height:531px;background:rgba(0,0,0,.06)"></div>
</div>
<div class="a" style="left:230px;top:405px;width:769px;height:22px;background:linear-gradient(#fcfcfc,#efefef);"></div>
<div class="a" style="left:230px;top:426px;width:769px;height:2px;background:#cdcdcd;"></div>
<div class="a" style="left:341.7px;top:405px;width:1px;height:22px;background:#e6e6e6;"></div>
<div class="a" style="left:466.0px;top:405px;width:1px;height:22px;background:#e6e6e6;"></div>
<div class="a" style="left:578.1px;top:405px;width:1px;height:22px;background:#e6e6e6;"></div>
<div class="a" style="left:678.2px;top:405px;width:1px;height:22px;background:#e6e6e6;"></div>
<div class="a" style="left:779.3px;top:405px;width:1px;height:22px;background:#e6e6e6;"></div>
<div class="a" style="left:840.0px;top:405px;width:1px;height:22px;background:#e6e6e6;"></div>
<div class="a" style="left:900.5px;top:405px;width:1px;height:22px;background:#e6e6e6;"></div>
<div class="a" style="left:960.8px;top:405px;width:1px;height:22px;background:#e6e6e6;"></div>
<div class="a" style="left:1059.5px;top:405px;width:1px;height:22px;background:#e6e6e6;"></div>
<div class="t" style="left:233.00px;top:411.08px;font-size:9.71px;color:#3485c5;"><span style="position:absolute;left:0.00px;top:0;transform:scaleX(0.9523);transform-origin:0 0">Koodi</span></div>
<div class="t" style="left:345.70px;top:411.08px;font-size:9.71px;color:#3485c5;"><span style="position:absolute;left:0.00px;top:0;transform:scaleX(0.9926);transform-origin:0 0">Nimi</span></div>
<div class="t" style="left:470.00px;top:411.08px;font-size:9.71px;color:#3485c5;"><span style="position:absolute;left:0.00px;top:0;transform:scaleX(0.9165);transform-origin:0 0">Selite</span></div>
<div class="t" style="left:582.10px;top:411.08px;font-size:9.71px;color:#3485c5;"><span style="position:absolute;left:0.00px;top:0;transform:scaleX(0.9327);transform-origin:0 0">Teksti-1</span></div>
<div class="t" style="left:682.20px;top:411.08px;font-size:9.71px;color:#3485c5;"><span style="position:absolute;left:0.00px;top:0;transform:scaleX(0.9327);transform-origin:0 0">Teksti-2</span></div>
<div class="t" style="left:783.30px;top:411.08px;font-size:9.71px;color:#3485c5;"><span style="position:absolute;left:0.00px;top:0;transform:scaleX(0.9381);transform-origin:0 0">Luku-1</span></div>
<div class="t" style="left:844.00px;top:411.08px;font-size:9.71px;color:#3485c5;"><span style="position:absolute;left:0.00px;top:0;transform:scaleX(0.9381);transform-origin:0 0">Luku-2</span></div>
<div class="t" style="left:904.50px;top:411.08px;font-size:9.71px;color:#3485c5;"><span style="position:absolute;left:0.00px;top:0;transform:scaleX(0.9414);transform-origin:0 0">Kok.luku-1</span></div>
<div class="t" style="left:964.80px;top:411.08px;font-size:9.71px;color:#3485c5;"><span style="position:absolute;left:0.00px;top:0;transform:scaleX(0.9414);transform-origin:0 0">Kok.luku-2</span></div>
<svg class="a" style="left:332.0px;top:413.4px" width="7" height="5" viewBox="0 0 7 5"><path d="M1.3 3.9L3.6 1.7L5.9 3.9" fill="none" stroke="#505050" stroke-width="1.0"/></svg>
<div class="clip" style="left:230.5px;top:428px;width:111.69999999999999px;height:103px"><div class="t" style="left:2.70px;top:7.08px;font-size:9.71px;color:#3a3a3a;"><span style="position:absolute;left:0.00px;top:0;transform:scaleX(0.9317);transform-origin:0 0">2019</span></div></div>
<div class="clip" style="left:343.2px;top:428px;width:123.30000000000001px;height:103px"><div class="t" style="left:2.70px;top:7.08px;font-size:9.71px;color:#3a3a3a;"><span style="position:absolute;left:0.00px;top:0;transform:scaleX(0.9317);transform-origin:0 0">2019</span></div></div>
<div class="clip" style="left:579.6px;top:428px;width:99.10000000000002px;height:103px"><div class="t" style="left:2.70px;top:7.08px;font-size:9.71px;color:#3a3a3a;"><span style="position:absolute;left:0.00px;top:0;transform:scaleX(0.9246);transform-origin:0 0">01.01.2019</span></div></div>
<div class="clip" style="left:679.7px;top:428px;width:100.09999999999991px;height:103px"><div class="t" style="left:2.70px;top:7.08px;font-size:9.71px;color:#3a3a3a;"><span style="position:absolute;left:0.00px;top:0;transform:scaleX(0.9246);transform-origin:0 0">31.12.2019</span></div></div>
<div class="clip" style="left:780.8px;top:428px;width:59.700000000000045px;height:103px"><div class="t" style="left:39.15px;top:7.08px;font-size:9.71px;color:#3a3a3a;"><span style="position:absolute;left:0.00px;top:0;transform:scaleX(0.9128);transform-origin:0 0">0,77</span></div></div>
<div class="clip" style="left:230.5px;top:428px;width:111.69999999999999px;height:103px"><div class="t" style="left:2.70px;top:27.18px;font-size:9.71px;color:#3a3a3a;"><span style="position:absolute;left:0.00px;top:0;transform:scaleX(0.9317);transform-origin:0 0">2020</span></div></div>
<div class="clip" style="left:343.2px;top:428px;width:123.30000000000001px;height:103px"><div class="t" style="left:2.70px;top:27.18px;font-size:9.71px;color:#3a3a3a;"><span style="position:absolute;left:0.00px;top:0;transform:scaleX(0.9317);transform-origin:0 0">2020</span></div></div>
<div class="clip" style="left:579.6px;top:428px;width:99.10000000000002px;height:103px"><div class="t" style="left:2.70px;top:27.18px;font-size:9.71px;color:#3a3a3a;"><span style="position:absolute;left:0.00px;top:0;transform:scaleX(0.9246);transform-origin:0 0">01.01.2020</span></div></div>
<div class="clip" style="left:679.7px;top:428px;width:100.09999999999991px;height:103px"><div class="t" style="left:2.70px;top:27.18px;font-size:9.71px;color:#3a3a3a;"><span style="position:absolute;left:0.00px;top:0;transform:scaleX(0.9246);transform-origin:0 0">31.12.2020</span></div></div>
<div class="clip" style="left:780.8px;top:428px;width:59.700000000000045px;height:103px"><div class="t" style="left:39.15px;top:27.18px;font-size:9.71px;color:#3a3a3a;"><span style="position:absolute;left:0.00px;top:0;transform:scaleX(0.9128);transform-origin:0 0">1,34</span></div></div>
<div class="clip" style="left:230.5px;top:428px;width:111.69999999999999px;height:103px"><div class="t" style="left:2.70px;top:47.28px;font-size:9.71px;color:#3a3a3a;"><span style="position:absolute;left:0.00px;top:0;transform:scaleX(0.9317);transform-origin:0 0">2021</span></div></div>
<div class="clip" style="left:343.2px;top:428px;width:123.30000000000001px;height:103px"><div class="t" style="left:2.70px;top:47.28px;font-size:9.71px;color:#3a3a3a;"><span style="position:absolute;left:0.00px;top:0;transform:scaleX(0.9317);transform-origin:0 0">2021</span></div></div>
<div class="clip" style="left:579.6px;top:428px;width:99.10000000000002px;height:103px"><div class="t" style="left:2.70px;top:47.28px;font-size:9.71px;color:#3a3a3a;"><span style="position:absolute;left:0.00px;top:0;transform:scaleX(0.9246);transform-origin:0 0">01.01.2021</span></div></div>
<div class="clip" style="left:679.7px;top:428px;width:100.09999999999991px;height:103px"><div class="t" style="left:2.70px;top:47.28px;font-size:9.71px;color:#3a3a3a;"><span style="position:absolute;left:0.00px;top:0;transform:scaleX(0.9246);transform-origin:0 0">31.12.2021</span></div></div>
<div class="clip" style="left:780.8px;top:428px;width:59.700000000000045px;height:103px"><div class="t" style="left:39.15px;top:47.28px;font-size:9.71px;color:#3a3a3a;"><span style="position:absolute;left:0.00px;top:0;transform:scaleX(0.9128);transform-origin:0 0">1,53</span></div></div>
<div class="clip" style="left:230.5px;top:428px;width:111.69999999999999px;height:103px"><div class="t" style="left:2.70px;top:67.38px;font-size:9.71px;color:#3a3a3a;"><span style="position:absolute;left:0.00px;top:0;transform:scaleX(0.9317);transform-origin:0 0">2022</span></div></div>
<div class="clip" style="left:343.2px;top:428px;width:123.30000000000001px;height:103px"><div class="t" style="left:2.70px;top:67.38px;font-size:9.71px;color:#3a3a3a;"><span style="position:absolute;left:0.00px;top:0;transform:scaleX(0.9317);transform-origin:0 0">2022</span></div></div>
<div class="clip" style="left:579.6px;top:428px;width:99.10000000000002px;height:103px"><div class="t" style="left:2.70px;top:67.38px;font-size:9.71px;color:#3a3a3a;"><span style="position:absolute;left:0.00px;top:0;transform:scaleX(0.9246);transform-origin:0 0">01.01.2022</span></div></div>
<div class="clip" style="left:679.7px;top:428px;width:100.09999999999991px;height:103px"><div class="t" style="left:2.70px;top:67.38px;font-size:9.71px;color:#3a3a3a;"><span style="position:absolute;left:0.00px;top:0;transform:scaleX(0.9246);transform-origin:0 0">31.12.2022</span></div></div>
<div class="clip" style="left:780.8px;top:428px;width:59.700000000000045px;height:103px"><div class="t" style="left:39.15px;top:67.38px;font-size:9.71px;color:#3a3a3a;"><span style="position:absolute;left:0.00px;top:0;transform:scaleX(0.9128);transform-origin:0 0">1,34</span></div></div>
<div class="clip" style="left:230.5px;top:428px;width:111.69999999999999px;height:103px"><div class="t" style="left:2.70px;top:87.48px;font-size:9.71px;color:#3a3a3a;"><span style="position:absolute;left:0.00px;top:0;transform:scaleX(0.9317);transform-origin:0 0">2023</span></div></div>
<div class="clip" style="left:343.2px;top:428px;width:123.30000000000001px;height:103px"><div class="t" style="left:2.70px;top:87.48px;font-size:9.71px;color:#3a3a3a;"><span style="position:absolute;left:0.00px;top:0;transform:scaleX(0.9317);transform-origin:0 0">2023</span></div></div>
<div class="clip" style="left:579.6px;top:428px;width:99.10000000000002px;height:103px"><div class="t" style="left:2.70px;top:87.48px;font-size:9.71px;color:#3a3a3a;"><span style="position:absolute;left:0.00px;top:0;transform:scaleX(0.9246);transform-origin:0 0">01.01.2023</span></div></div>
<div class="clip" style="left:679.7px;top:428px;width:100.09999999999991px;height:103px"><div class="t" style="left:2.70px;top:87.48px;font-size:9.71px;color:#3a3a3a;"><span style="position:absolute;left:0.00px;top:0;transform:scaleX(0.9246);transform-origin:0 0">31.12.2023</span></div></div>
<div class="clip" style="left:780.8px;top:428px;width:59.700000000000045px;height:103px"><div class="t" style="left:39.15px;top:87.48px;font-size:9.71px;color:#3a3a3a;"><span style="position:absolute;left:0.00px;top:0;transform:scaleX(0.9128);transform-origin:0 0">1,53</span></div></div>
<div class="a" style="left:230px;top:531px;width:769px;height:6px;background:#ececec;"></div>
<div class="a" style="left:242px;top:531.5px;width:757px;height:6px;background:#c1c1c1;"></div>
<svg class="a" style="left:233px;top:533px" width="5" height="7" viewBox="0 0 5 7"><path d="M4.2 0.6L1 3.5L4.2 6.4z" fill="#a8a8a8"/></svg>
<div class="orange" style="left:374px;top:2px;width:67px;height:25.5px"></div>
<div class="orange" style="left:-1.3px;top:210.4px;width:69.8px;height:22.19999999999999px"></div>
<div class="orange" style="left:225.5px;top:250.5px;width:784.5px;height:26.30000000000001px"></div>
<div class="orange" style="left:228px;top:509px;width:668.8px;height:28px"></div>
<svg class="a" style="left:740px;top:30px" width="30" height="30" viewBox="740 30 30 30"><path d="M753.3 47.5L753.3 36.1Q753.3 34.3 755.35 34.3Q757.4 34.3 757.4 36.1L757.4 41.9Q757.4 40.5 758.85 40.5Q760.3 40.5 760.3 41.9L760.3 42.5Q760.3 41.2 761.6 41.2Q762.9 41.2 762.9 42.6L762.9 43.1Q762.9 41.9 764.2 41.9Q765.3 41.9 765.3 43.3L765.3 50Q765.3 56.3 759.6 56.3Q756.2 56.3 753.7 53.6L749.1 48.4Q748.1 47.1 749.3 46.3Q750.5 45.7 751.6 46.6L753.3 48.2Z" fill="#fff" stroke="#40444f" stroke-width="1.15" stroke-linejoin="round"/><path d="M757.4 41.8V45M760.3 42.4V45M762.9 43V45" stroke="#40444f" stroke-width="0.9"/></svg>
</body></html>
